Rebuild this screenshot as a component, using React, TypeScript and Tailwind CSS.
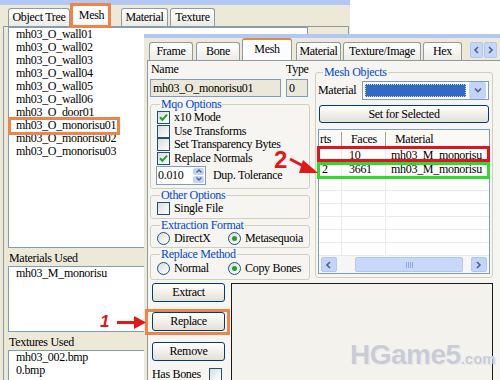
import React from 'react';

type TabProps = { label: string; w: string; active?: boolean; className?: string };

function Tab({ label, w, active, className = '' }: TabProps) {
  return (
    <div
      className={`flex items-center justify-center rounded-t-[3px] border border-b-0 border-[#919b9c] ${
        active
          ? 'h-[22px] border-t-[2px] border-t-[#e68b2c] bg-[#fcfcfe] pb-[2px]'
          : 'h-[18px] bg-linear-to-b from-white to-[#ecebe5]'
      } ${w} ${className}`}
    >
      {label}
    </div>
  );
}

function CheckBox({ checked }: { checked?: boolean }) {
  return (
    <span className="flex h-[13px] w-[13px] shrink-0 items-center justify-center border border-[#1c5180] bg-linear-to-br from-[#dcdcd7] to-white">
      {checked && (
        <svg width="9" height="9" viewBox="0 0 9 9">
          <path d="M1 4.2 L3.4 6.8 L8 1.6" stroke="#21a121" strokeWidth="2" fill="none" />
        </svg>
      )}
    </span>
  );
}

function Radio({ checked }: { checked?: boolean }) {
  return (
    <span className="flex h-[13px] w-[13px] shrink-0 items-center justify-center rounded-full border border-[#1c5180] bg-linear-to-br from-[#dcdcd7] to-white">
      {checked && <span className="h-[5px] w-[5px] rounded-full bg-[#21a121]" />}
    </span>
  );
}

function XpButton({ label, className = '' }: { label: string; className?: string }) {
  return (
    <div
      className={`flex items-center justify-center rounded-[3px] border border-[#003c74] bg-linear-to-b from-white to-[#e3e1d6] ${className}`}
    >
      {label}
    </div>
  );
}

function Chevron({ dir }: { dir: 'left' | 'right' | 'down' }) {
  const d = dir === 'left' ? 'M5 1 L2 4 L5 7' : dir === 'right' ? 'M2 1 L5 4 L2 7' : 'M1 2.5 L4 5.5 L7 2.5';
  return (
    <svg width="8" height="8" viewBox="0 0 8 8">
      <path d={d} stroke="#4d6185" strokeWidth="1.6" fill="none" />
    </svg>
  );
}

const meshItems = [
  'mh03_O_wall01',
  'mh03_O_wall02',
  'mh03_O_wall03',
  'mh03_O_wall04',
  'mh03_O_wall05',
  'mh03_O_wall06',
  'mh03_O_door01',
  'mh03_O_monorisu01',
  'mh03_O_monorisu02',
  'mh03_O_monorisu03',
];

export default function App() {
  return (
    <div className="relative h-[380px] w-[500px] overflow-hidden bg-white font-['Liberation_Serif','Times_New_Roman',serif] text-[12px] leading-[13px] tracking-[-0.3px] text-black">
      {/* back window */}
      <div className="absolute left-0 top-0 flex h-[380px] w-[350px] flex-col bg-[#ece9d8]">
        <div className="h-[5px] shrink-0 bg-[#b3c7f3]" />
        <div className="flex h-[21px] shrink-0 items-end pl-[8px]">
          <Tab label="Object Tree" w="w-[62px]" />
          <Tab label="Mesh" w="w-[39px]" active className="ml-[2px]" />
          <Tab label="Material" w="w-[47px]" className="ml-[10px]" />
          <Tab label="Texture" w="w-[45px]" className="ml-[2px]" />
        </div>
        <div className="ml-[3px] flex w-[346px] flex-1 flex-col border-x border-t border-[#919b9c] pl-[4px]">
          <div className="h-[221px] w-[300px] shrink-0 border border-[#7f9db9] bg-white pl-[7px]">
            {meshItems.map((m) => (
              <div key={m} className="h-[13px]">
                {m}
              </div>
            ))}
          </div>
          <div className="h-[18px] shrink-0 pl-[1px] pt-[4px]">Materials Used</div>
          <div className="h-[66px] w-[300px] shrink-0 border border-[#7f9db9] bg-white pl-[7px]">
            <div className="h-[13px]">mh03_M_monorisu</div>
          </div>
          <div className="h-[18px] shrink-0 pl-[1px] pt-[4px]">Textures Used</div>
          <div className="h-[40px] w-[300px] shrink-0 border border-[#7f9db9] bg-white pl-[7px]">
            <div className="h-[13px]">mh03_002.bmp</div>
            <div className="h-[13px]">0.bmp</div>
          </div>
        </div>
      </div>

      {/* front window */}
      <div className="absolute left-[144px] top-[34px] flex h-[346px] w-[356px] flex-col bg-[#ece9d8]">
        <div className="h-[4px] shrink-0 bg-[#b3c7f3]" />
        <div className="flex h-[22px] shrink-0 items-end pl-[5px]">
          <Tab label="Frame" w="w-[44px]" />
          <Tab label="Bone" w="w-[44px]" className="ml-[3px]" />
          <Tab label="Mesh" w="w-[50px]" active className="ml-[2px]" />
          <Tab label="Material" w="w-[45px]" className="ml-[4px]" />
          <Tab label="Texture/Image" w="w-[78px]" className="ml-[2px]" />
          <Tab label="Hex" w="w-[39px]" className="ml-[2px]" />
          <div className="mb-[2px] ml-[8px] flex gap-[1px]">
            <div className="flex h-[16px] w-[13px] items-center justify-center rounded-[2px] border border-[#b2c6f2] bg-[#c6d6fb]">
              <Chevron dir="left" />
            </div>
            <div className="flex h-[16px] w-[13px] items-center justify-center rounded-[2px] border border-[#b2c6f2] bg-[#c6d6fb]">
              <Chevron dir="right" />
            </div>
          </div>
        </div>

        <div className="ml-[3px] flex flex-1 flex-col border-l border-t border-[#919b9c] bg-[#f6f5f1] pl-[2px] pr-[7px]">
          <div className="flex">
            {/* left column */}
            <div className="flex w-[160px] shrink-0 flex-col pt-[2px]">
              <div className="flex h-[14px]">
                <span className="w-[136px] pl-[1px]">Name</span>
                <span>Type</span>
              </div>
              <div className="mt-[2px] flex h-[18px]">
                <div className="flex w-[131px] items-center border border-[#7f9db9] bg-[#ebe8da] pl-[2px]">mh03_O_monorisu01</div>
                <div className="ml-[5px] flex w-[22px] items-center border border-[#7f9db9] bg-[#ebe8da] pl-[2px]">0</div>
              </div>

              <fieldset className="mt-[1px] rounded-[3px] border border-[#d0d0bf] px-[5px] pb-[3px]">
                <legend className="ml-[4px] px-[1px] text-[#0046d5]">Mqo Options</legend>
                {[
                  ['x10 Mode', true],
                  ['Use Transforms', false],
                  ['Set Transparency Bytes', false],
                  ['Replace Normals', true],
                ].map(([l, c]) => (
                  <div key={l as string} className="ml-[1px] flex h-[13.5px] items-center gap-[4px]">
                    <CheckBox checked={c as boolean} />
                    <span>{l as string}</span>
                  </div>
                ))}
                <div className="flex h-[20px] items-center">
                  <div className="flex h-[19px] w-[50px] items-center border border-[#7f9db9] bg-white pl-[1px]">
                    <span className="flex-1">0.010</span>
                    <div className="flex h-full w-[12px] flex-col gap-[1px] py-[1px] pr-[1px]">
                      <div className="flex flex-1 items-center justify-center rounded-[2px] bg-[#c3d4fa]">
                        <svg width="6" height="4" viewBox="0 0 6 4">
                          <path d="M0.5 3.5 L3 1 L5.5 3.5" stroke="#4d6185" strokeWidth="1.3" fill="none" />
                        </svg>
                      </div>
                      <div className="flex flex-1 items-center justify-center rounded-[2px] bg-[#c3d4fa]">
                        <svg width="6" height="4" viewBox="0 0 6 4">
                          <path d="M0.5 0.5 L3 3 L5.5 0.5" stroke="#4d6185" strokeWidth="1.3" fill="none" />
                        </svg>
                      </div>
                    </div>
                  </div>
                  <span className="ml-[7px]">Dup. Tolerance</span>
                </div>
              </fieldset>

              <fieldset className="rounded-[3px] border border-[#d0d0bf] px-[5px] pb-[3px]">
                <legend className="ml-[4px] px-[1px] text-[#0046d5]">Other Options</legend>
                <div className="ml-[1px] flex h-[13px] items-center gap-[4px]">
                  <CheckBox />
                  <span>Single File</span>
                </div>
              </fieldset>

              <fieldset className="rounded-[3px] border border-[#d0d0bf] px-[5px] pb-[2px]">
                <legend className="ml-[4px] px-[1px] text-[#0046d5]">Extraction Format</legend>
                <div className="ml-[1px] flex h-[13px] items-center">
                  <div className="flex w-[71px] items-center gap-[4px]">
                    <Radio />
                    <span>DirectX</span>
                  </div>
                  <div className="flex items-center gap-[4px]">
                    <Radio checked />
                    <span>Metasequoia</span>
                  </div>
                </div>
              </fieldset>

              <fieldset className="rounded-[3px] border border-[#d0d0bf] px-[5px] pb-[4px]">
                <legend className="ml-[4px] px-[1px] text-[#0046d5]">Replace Method</legend>
                <div className="ml-[1px] flex h-[14px] items-center">
                  <div className="flex w-[71px] items-center gap-[4px]">
                    <Radio />
                    <span>Normal</span>
                  </div>
                  <div className="flex items-center gap-[4px]">
                    <Radio checked />
                    <span>Copy Bones</span>
                  </div>
                </div>
              </fieldset>
            </div>

            {/* right column */}
            <div className="ml-[5px] flex-1 pt-[5px]">
              <fieldset className="rounded-[3px] border border-[#d0d0bf] px-[2px] pb-[3px]">
                <legend className="ml-[5px] px-[1px] text-[#0046d5]">Mesh Objects</legend>
                <div className="mt-[1px] flex h-[20px] items-center pr-[1px]">
                  <span>Material</span>
                  <div className="ml-auto flex h-[19px] w-[127px] items-center border border-[#7f9db9] bg-white p-[2px]">
                    <div className="h-full flex-1 border border-dotted border-[#c9d6f0] bg-[#316ac5]" />
                    <div className="ml-[3px] flex h-[17px] w-[17px] items-center justify-center rounded-[2px] bg-[#c3d4fa]">
                      <Chevron dir="down" />
                    </div>
                  </div>
                </div>
                <XpButton label="Set for Selected" className="mx-[1px] mt-[5px] h-[18px]" />

                <div className="mt-[6px] flex h-[145px] flex-col border border-[#7f9db9] bg-white">
                  <div className="flex h-[19px] shrink-0 items-center border-b border-[#d6d2c2] bg-[#faf9f6] pt-[2px]">
                    <span className="h-full w-[23px] overflow-hidden border-r border-[#a6a39a] pl-[1px] leading-[15px]">rts</span>
                    <span className="h-full w-[44px] border-r border-[#a6a39a] pl-[9px] leading-[15px]">Faces</span>
                    <span className="h-full flex-1 pl-[9px] leading-[15px]">Material</span>
                  </div>
                  {[
                    ['', '10', 'mh03_M_monorisu', 'h-[14px]'],
                    ['2', '3661', 'mh03_M_monorisu', 'h-[15px]'],
                    ['', '', '', 'h-[13px]'],
                    ['', '', '', 'h-[13px]'],
                    ['', '', '', 'h-[13px]'],
                    ['', '', '', 'h-[13px]'],
                    ['', '', '', 'h-[13px]'],
                    ['', '', '', 'h-[13px]'],
                  ].map(([a, b, c, h], i) => (
                    <div key={i} className={`flex shrink-0 items-center border-b border-[#ebeae6] ${h}`}>
                      <span className="h-full w-[23px] border-r border-[#ebeae6] pl-[3px]">{a}</span>
                      <span className="h-full w-[44px] border-r border-[#ebeae6] pl-[7px]">{b}</span>
                      <span className="h-full flex-1 overflow-hidden whitespace-nowrap pl-[5px]">{c}</span>
                    </div>
                  ))}
                  <div className="flex h-[17px] shrink-0 items-center gap-[2px] bg-[#f6f6f3] px-[2px]">
                    <div className="flex h-[15px] w-[16px] items-center justify-center rounded-[2px] border border-[#b2c6f2] bg-[#c3d4fa]">
                      <Chevron dir="left" />
                    </div>
                    <div className="ml-[16px] flex h-[15px] w-[108px] items-center justify-center rounded-[2px] border border-[#b2c6f2] bg-[#c8d8fb]">
                      <div className="flex gap-[1px]">
                        {[0, 1, 2, 3].map((g) => (
                          <span key={g} className="h-[6px] w-[1px] bg-[#8ea8e0]" />
                        ))}
                      </div>
                    </div>
                    <div className="ml-auto flex h-[15px] w-[16px] items-center justify-center rounded-[2px] border border-[#b2c6f2] bg-[#c3d4fa]">
                      <Chevron dir="right" />
                    </div>
                  </div>
                </div>
              </fieldset>
            </div>
          </div>

          {/* bottom row */}
          <div className="mt-[3px] flex flex-1">
            <div className="flex w-[81px] shrink-0 flex-col pl-[2px]">
              <XpButton label="Extract" className="h-[19px] w-[73px]" />
              <XpButton label="Replace" className="mt-[10px] h-[19px] w-[73px]" />
              <XpButton label="Remove" className="mt-[11px] h-[19px] w-[73px]" />
              <div className="mt-[7px] flex h-[13px] items-center">
                <span className="w-[57px]">Has Bones</span>
                <CheckBox />
              </div>
            </div>
            <div className="relative flex-1 border-x border-t border-[#1a1a1a] bg-[#f3f2ed]">
              <span className="absolute left-[118px] top-[57px] whitespace-nowrap font-['Liberation_Sans',Arial,sans-serif] text-[28px] font-bold leading-[28px] tracking-[-0.5px] text-[#c9ccd4] [text-shadow:0_0_1px_#ffffff,1px_1px_0_#e6e6ea]">
                HGame5<span className="text-[15px] tracking-[0px]">.com</span>
              </span>
            </div>
          </div>
        </div>
      </div>

      {/* annotations */}
      <div className="absolute left-[70px] top-[3px] h-[25px] w-[41px] border-[3px] border-[#ee8447]" />
      <div className="absolute left-[8px] top-[117px] h-[18px] w-[112px] border-[3px] border-[#ee8447]" />
      <div className="absolute left-[145px] top-[309px] h-[26px] w-[85px] border-[3px] border-[#ee8447]" />
      <div className="absolute left-[317px] top-[146px] h-[16px] w-[173px] border-[3px] border-[#e0141c]" />
      <div className="absolute left-[317px] top-[162px] h-[17px] w-[173px] border-[3px] border-[#33d633]" />

      <span className="absolute left-[100px] top-[313px] font-['Liberation_Sans',Arial,sans-serif] text-[17px] font-bold italic leading-[17px] text-[#e01818]">1</span>
      <svg className="absolute left-[116px] top-[315px]" width="32" height="15" viewBox="0 0 32 15">
        <path d="M1 7.5 L20 7.5" stroke="#e01818" strokeWidth="3" />
        <path d="M18 1 L30 7.5 L18 14 Z" fill="#e01818" />
      </svg>

      <span className="absolute left-[274px] top-[152px] font-['Liberation_Sans',Arial,sans-serif] text-[24px] font-bold leading-[16px] text-[#e01818]">2</span>
      <svg className="absolute left-[289px] top-[156px]" width="30" height="22" viewBox="0 0 30 22">
        <path d="M1 3 L18 12" stroke="#e01818" strokeWidth="3" />
        <path d="M14 4 L29 17 L10 17 Z" fill="#e01818" />
      </svg>
    </div>
  );
}
